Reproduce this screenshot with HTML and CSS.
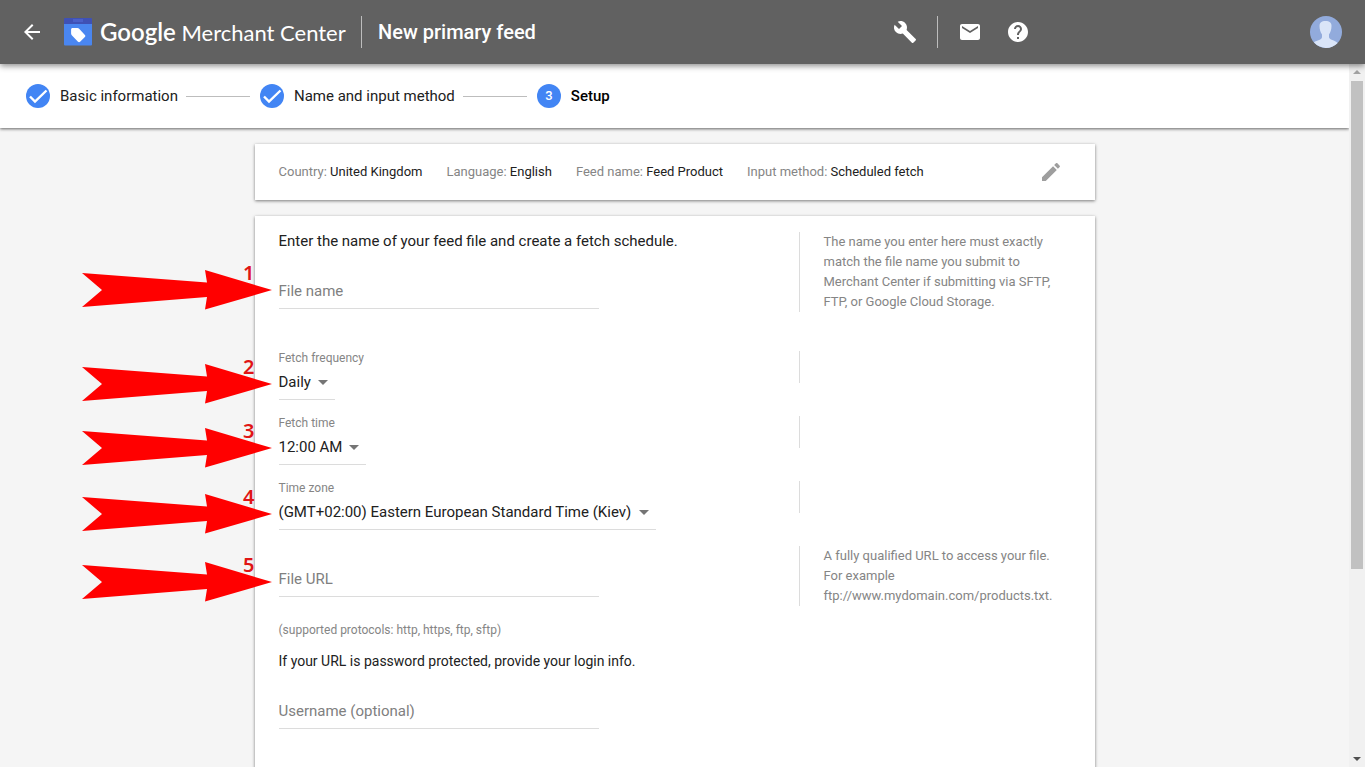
FILE: index.html
```html
<!DOCTYPE html>
<html lang="en">
<head>
<meta charset="utf-8">
<title>New primary feed - Google Merchant Center</title>
<link rel="stylesheet" href="styles.css">
</head>
<body>
<svg class="defs" aria-hidden="true">
  <symbol id="check" viewBox="0 0 24 24"><circle cx="12" cy="12" r="12" fill="#4285f4"/><path d="M4 12.500l5 5L20.500 6.500" fill="none" stroke="#fff" stroke-width="2.400"/></symbol>
  <symbol id="pointer" viewBox="0 0 190 40"><path d="M0 3L125 12.500L123 0L190 20L123 39.500L125 27L0 37L20 20Z" fill="#f00"/></symbol>
</svg>
<header class="topbar">
  <button class="icon-button" aria-label="Back"><svg viewBox="0 0 24 24"><path d="M20 11H7.830l5.590-5.590L12 4l-8 8 8 8 1.410-1.410L7.830 13H20v-2z"/></svg></button>
  <a class="brand" href="#">
    <svg class="brand-mark" viewBox="0 0 28 28"><path fill="#4a86f0" d="M0 5h28v21.500a1 1 0 0 1-1 1H1a1 1 0 0 1-1-1z"/><path fill="#3f51b5" d="M1 0h26a1 1 0 0 1 1 1v5H0V1a1 1 0 0 1 1-1z"/><path fill="#4a5fc8" d="M9 1h10v3H9z"/><path fill="#fff" d="M8.500 10h5c.6 0 1 .2 1.400.6l6 6.400c.6.600.6 1.500 0 2.100l-4.800 4.600c-.6.600-1.500.6-2.100 0L8 17.400c-.6-.6-.9-1-.9-1.800V11.500c0-.8.6-1.500 1.400-1.500z"/></svg>
    <span class="brand-name"><b>Google</b> Merchant Center</span>
  </a>
  <h1 class="page-title">New primary feed</h1>
  <div class="tools">
    <button class="icon-button" aria-label="Tools"><svg viewBox="0 0 24 24"><path d="M22.700 19l-9.100-9.100c.9-2.300.4-5-1.500-6.900-2-2-5-2.400-7.400-1.300L9 6 6 9 1.600 4.700C.4 7.100.9 10.100 2.900 12.100c1.900 1.900 4.600 2.400 6.900 1.500l9.100 9.100c.4.4 1 .4 1.400 0l2.300-2.300c.5-.4.5-1.100.1-1.400z"/></svg></button>
    <span class="divider"></span>
    <button class="icon-button" aria-label="Messages"><svg viewBox="0 0 24 24"><path d="M20 4H4c-1.100 0-2 .9-2 2v12c0 1.100.9 2 2 2h16c1.100 0 2-.9 2-2V6c0-1.100-.9-2-2-2zm0 4l-8 5-8-5V6l8 5 8-5v2z"/></svg></button>
    <button class="icon-button help" aria-label="Help"><svg viewBox="0 0 24 24"><path d="M12 2C6.480 2 2 6.480 2 12s4.480 10 10 10 10-4.480 10-10S17.520 2 12 2zm1 17h-2v-2h2v2zm2.070-7.750l-.9.920C13.450 12.900 13 13.500 13 15h-2v-.5c0-1.100.45-2.100 1.170-2.830l1.240-1.260c.37-.36.590-.86.590-1.410 0-1.100-.9-2-2-2s-2 .9-2 2H8c0-2.210 1.790-4 4-4s4 1.790 4 4c0 .88-.36 1.680-.93 2.250z"/></svg></button>
  </div>
  <button class="avatar" aria-label="Account"><svg viewBox="0 0 32 32"><circle cx="16" cy="16" r="16" fill="#92abdc"/><path fill="#dae5f8" d="M15.500 5c4 0 6 1.500 6 5 0 3.500-1 6.500-2.500 8.500V21c0 3 6 3 8.600 6a16 16 0 0 1-23.700-.7C7 24 12 24 12 21v-2.500C10.500 16.500 9.500 13.500 9.500 10c0-3.500 2-5 6-5z"/></svg></button>
</header>
<div class="viewport">
  <div class="content">
    <ol class="stepper">
      <li class="step"><svg class="step-icon"><use href="#check"/></svg>Basic information</li>
      <li class="step"><svg class="step-icon"><use href="#check"/></svg>Name and input method</li>
      <li class="step current"><span class="step-icon number">3</span>Setup</li>
    </ol>
    <main class="page">
      <section class="card summary">
        <span>Country: <em>United Kingdom</em></span>
        <span>Language: <em>English</em></span>
        <span>Feed name: <em>Feed Product</em></span>
        <span>Input method: <em>Scheduled fetch</em></span>
        <button class="icon-button edit" aria-label="Edit"><svg viewBox="0 0 24 24"><path d="M3 17.250V21h3.750L17.810 9.940l-3.750-3.750L3 17.250zM20.710 7.040c.39-.39.390-1.020 0-1.410l-2.340-2.340c-.39-.39-1.020-.39-1.410 0l-1.830 1.830 3.750 3.750 1.830-1.830z"/></svg></button>
      </section>
      <form class="card form">
        <div class="row row-intro">
          <div class="field">
            <p class="lead">Enter the name of your feed file and create a fetch schedule.</p>
            <input class="text-input" type="text" placeholder="File name" aria-label="File name">
            <div class="callout callout-1"><svg><use href="#pointer"/></svg><span>1</span></div>
          </div>
          <p class="hint">The name you enter here must exactly match the file name you submit to Merchant Center if submitting via SFTP, FTP, or Google Cloud Storage.</p>
        </div>
        <div class="row">
          <div class="field">
            <label for="frequency">Fetch frequency</label>
            <div class="select"><select id="frequency"><option>Daily</option></select></div>
            <div class="callout callout-2"><svg><use href="#pointer"/></svg><span>2</span></div>
          </div>
          <div class="hint empty"></div>
        </div>
        <div class="row">
          <div class="field">
            <label for="time">Fetch time</label>
            <div class="select"><select id="time"><option>12:00 AM</option></select></div>
            <div class="callout callout-3"><svg><use href="#pointer"/></svg><span>3</span></div>
          </div>
          <div class="hint empty"></div>
        </div>
        <div class="row">
          <div class="field">
            <label for="zone">Time zone</label>
            <div class="select"><select id="zone"><option>(GMT+02:00) Eastern European Standard Time (Kiev)</option></select></div>
            <div class="callout callout-4"><svg><use href="#pointer"/></svg><span>4</span></div>
          </div>
          <div class="hint empty"></div>
        </div>
        <div class="row">
          <div class="field url">
            <input class="text-input" type="text" placeholder="File URL" aria-label="File URL">
            <p class="note">(supported protocols: http, https, ftp, sftp)</p>
            <p class="login">If your URL is password protected, provide your login info.</p>
            <input class="text-input" type="text" placeholder="Username (optional)" aria-label="Username (optional)">
            <div class="callout callout-5"><svg><use href="#pointer"/></svg><span>5</span></div>
          </div>
          <p class="hint">A fully qualified URL to access your file. For example ftp://www.mydomain.com/products.txt.</p>
        </div>
      </form>
    </main>
  </div>
  <div class="scrollbar" aria-hidden="true">
    <svg class="up" viewBox="0 0 16 17"><path d="M4 10h8L8 6z"/></svg>
    <div class="track"><div class="thumb"></div></div>
    <svg viewBox="0 0 16 17"><path d="M4 7h8l-4 4z"/></svg>
  </div>
</div>
</body>
</html>
```
FILE: styles.css
```css
* { box-sizing: border-box; }

body {
  margin: 0;
  height: 100vh;
  display: flex;
  flex-direction: column;
  overflow: hidden;
  background: #f5f5f5;
  color: #212121;
  font: 15px/20px Roboto, "Liberation Sans", sans-serif;
}

p, h1, ol { margin: 0; padding: 0; }
button { padding: 0; border: 0; background: none; cursor: pointer; }
svg { display: block; }
.defs { position: absolute; width: 0; height: 0; }

.topbar {
  position: relative;
  z-index: 2;
  flex: none;
  display: flex;
  align-items: center;
  height: 64px;
  padding: 0 23px 0 20px;
  background: #616161;
  color: #fff;
  box-shadow: 0 2px 6px rgba(0, 0, 0, .45);
}
.icon-button { flex: none; width: 24px; height: 24px; color: #fff; }
.icon-button svg { width: 24px; height: 24px; fill: currentColor; }
.brand {
  display: flex;
  align-items: center;
  gap: 8px;
  width: 297px;
  margin-left: 20px;
  color: #fff;
  text-decoration: none;
}
.brand-mark { flex: none; width: 28px; height: 28px; }
.brand-name { font: 22px/32px Lato, sans-serif; white-space: nowrap; }
.brand-name b { font-size: 24px; font-weight: 600; }
.page-title {
  padding-left: 16px;
  border-left: 1px solid #bdbdbd;
  font-size: 20px;
  line-height: 32px;
  font-weight: 500;
  white-space: nowrap;
}
.tools { display: flex; align-items: center; margin-left: auto; }
.divider { width: 1px; height: 32px; margin: 0 20px; background: #bdbdbd; }
.help { margin-left: 24px; }
.avatar { flex: none; width: 32px; height: 32px; margin-left: 280px; }

.viewport { flex: 1; min-height: 0; display: flex; }
.content { flex: 1; min-width: 0; overflow: hidden; }

.stepper {
  display: flex;
  align-items: center;
  height: 64px;
  padding: 0 26px;
  background: #fff;
  color: #212121;
  list-style: none;
  box-shadow: 0 1px 3px rgba(0, 0, 0, .6);
}
.step { display: flex; align-items: center; white-space: nowrap; }
.step:not(:last-child)::after {
  content: "";
  width: 64px;
  height: 1px;
  margin: 0 10px 0 8px;
  background: #bdbdbd;
}
.step-icon { width: 24px; height: 24px; margin-right: 10px; }
.number {
  border-radius: 50%;
  background: #4285f4;
  color: #fff;
  font-size: 13px;
  line-height: 24px;
  font-weight: 500;
  text-align: center;
}
.current { color: #000; font-weight: 500; }

.page {
  display: flex;
  flex-direction: column;
  gap: 16px;
  max-width: 840px;
  margin: 0 auto;
  padding-top: 16px;
}
.card { background: #fff; box-shadow: 0 1px 3px rgba(0, 0, 0, .5); }
.summary {
  display: flex;
  align-items: center;
  gap: 24px;
  height: 56px;
  padding: 0 32px 0 24px;
  color: #858585;
  font-size: 13px;
  line-height: 22px;
}
.summary em { color: #212121; font-style: normal; }
.edit { margin-left: auto; color: #9e9e9e; }

.form { padding: 16px 24px; min-height: 640px; }
.row {
  display: grid;
  grid-template-columns: 520px 1fr;
  align-items: start;
  min-height: 65px;
}
.row-intro { min-height: 119px; }
.field { position: relative; }
.lead { line-height: 18px; }
.text-input {
  display: block;
  width: 320px;
  height: 28px;
  margin-top: 31px;
  padding: 0 0 7px;
  border: 0;
  border-bottom: 1px solid #dcdcdc;
  background: none;
  color: #212121;
  font: inherit;
}
.text-input::placeholder { color: #808080; }
.url .text-input { margin-top: 23px; }
.field label {
  display: block;
  color: #858585;
  font-size: 12px;
  line-height: 14px;
}
.select {
  position: relative;
  width: max-content;
  margin-top: 6px;
  border-bottom: 1px solid #dcdcdc;
}
.select select {
  appearance: none;
  display: block;
  height: 28px;
  padding: 0 23px 6px 0;
  border: 0;
  background: none;
  color: #212121;
  font: inherit;
}
.select::after {
  content: "";
  position: absolute;
  right: 7px;
  top: 9px;
  border: 5px solid transparent;
  border-top-color: #757575;
  border-bottom: 0;
  pointer-events: none;
}
.hint {
  min-height: 32px;
  padding: 0 16px 0 24px;
  border-left: 1px solid #dcdcdc;
  color: #858585;
  font-size: 13px;
}
.note { margin-top: 23px; color: #858585; font-size: 12px; }
.login { margin-top: 11px; font-size: 14px; }
.url .login + .text-input { margin-top: 30px; }

.callout { position: absolute; left: -197px; width: 190px; height: 40px; pointer-events: none; }
.callout svg { width: 190px; height: 40px; }
.callout span {
  position: absolute;
  right: 17px;
  top: -7px;
  color: #e01515;
  font: 600 20px/20px "Noto Sans", sans-serif;
}
.callout-1 { top: 38px; }
.callout-2 { top: 13px; }
.callout-3 { top: 12px; }
.callout-4 { top: 13px; }
.callout-5 { top: 16px; }

.scrollbar {
  flex: none;
  display: flex;
  flex-direction: column;
  width: 16px;
  background: #f1f1f1;
}
.scrollbar svg { flex: none; width: 16px; height: 17px; fill: #505050; }
.scrollbar .up { fill: #a3a3a3; }
.track { flex: 1; padding: 0 2px; }
.thumb { height: 73%; background: #c1c1c1; }
```
